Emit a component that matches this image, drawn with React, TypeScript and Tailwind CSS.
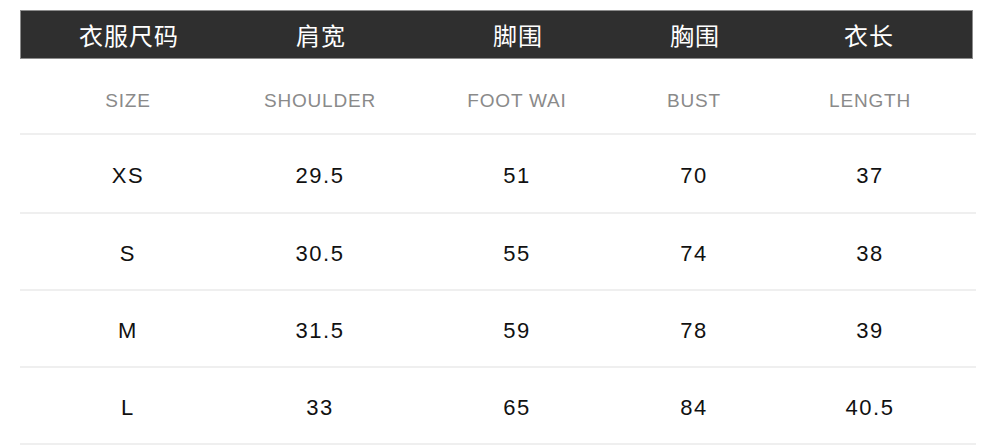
const heads = ["衣服尺码", "肩宽", "脚围", "胸围", "衣长"];
const subs = ["SIZE", "SHOULDER", "FOOT WAI", "BUST", "LENGTH"];
const rows = [
  ["XS", "29.5", "51", "70", "37"],
  ["S", "30.5", "55", "74", "38"],
  ["M", "31.5", "59", "78", "39"],
  ["L", "33", "65", "84", "40.5"],
];

const cols = "grid grid-cols-[216px_168px_226px_128px_218px]";

export default function App() {
  return (
    <div className="w-[1000px] h-[448px] bg-white overflow-hidden pt-[10px] pl-[20px]">
      <div
        className={`${cols} h-[49px] w-[953px] bg-[#2f2f2f] border border-[#8c8c8c] items-center text-white text-[24px] font-normal tracking-[1px]`}
        style={{ fontFamily: '"Noto Sans CJK SC", "Noto Sans", sans-serif' }}
      >
        {heads.map((h, i) => (
          <div key={i} className={`text-center leading-none ${i === 4 ? "pl-[2px]" : ""}`}>
            {h}
          </div>
        ))}
      </div>
      <div
        className={`${cols} h-[76px] w-[956px] border-b-2 border-[#efefef] items-center pt-[9px] text-[19px] text-[#8a8a8a] tracking-[0.8px]`}
        style={{ fontFamily: '"Liberation Sans", Arial, sans-serif' }}
      >
        {subs.map((s, i) => (
          <div key={i} className={`text-center leading-none ${i === 4 ? "pl-[6px]" : ""}`}>
            {s}
          </div>
        ))}
      </div>
      {rows.map((r, ri) => (
        <div
          key={ri}
          className={`${cols} ${ri === 0 ? "h-[79px]" : "h-[77px]"} w-[956px] border-b-2 border-[#efefef] items-center pt-[4px] text-[22px] text-[#111] tracking-[1.6px]`}
          style={{ fontFamily: '"Liberation Sans", Arial, sans-serif' }}
        >
          {r.map((c, i) => (
            <div key={i} className={`text-center leading-none ${i === 4 ? "pl-[6px]" : ""}`}>
              {c}
            </div>
          ))}
        </div>
      ))}
    </div>
  );
}
